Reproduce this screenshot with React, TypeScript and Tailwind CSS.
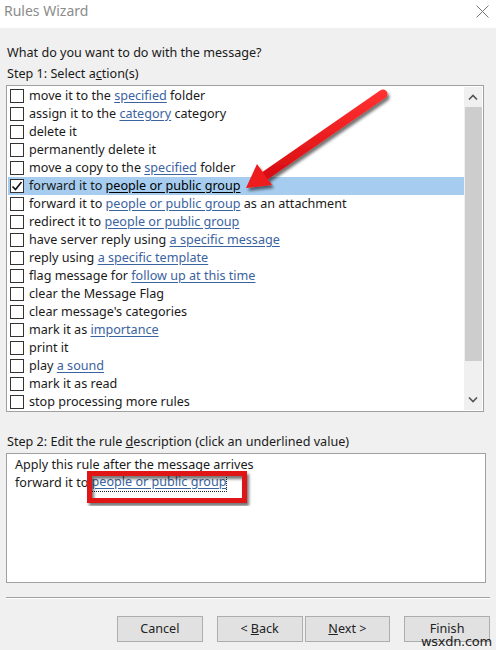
import React from 'react'

type Part = string | { link: string }

const actions: Part[][] = [
  ['move it to the ', { link: 'specified' }, ' folder'],
  ['assign it to the ', { link: 'category' }, ' category'],
  ['delete it'],
  ['permanently delete it'],
  ['move a copy to the ', { link: 'specified' }, ' folder'],
  ['forward it to ', { link: 'people or public group' }],
  ['forward it to ', { link: 'people or public group' }, ' as an attachment'],
  ['redirect it to ', { link: 'people or public group' }],
  ['have server reply using ', { link: 'a specific message' }],
  ['reply using ', { link: 'a specific template' }],
  ['flag message for ', { link: 'follow up at this time' }],
  ['clear the Message Flag'],
  ["clear message's categories"],
  ['mark it as ', { link: 'importance' }],
  ['print it'],
  ['play ', { link: 'a sound' }],
  ['mark it as read'],
  ['stop processing more rules'],
]

const SELECTED = 5

function Checkbox({ checked }: { checked: boolean }) {
  return (
    <div className="w-[14px] h-[14px] border border-[#333] bg-white flex items-center justify-center shrink-0">
      {checked && (
        <svg width="12" height="12" viewBox="0 0 12 12">
          <path d="M1.5 6.5 L4.5 9.5 L10.5 2" fill="none" stroke="#111" strokeWidth="1.6" />
        </svg>
      )}
    </div>
  )
}

function ActionRow({ parts, selected }: { parts: Part[]; selected: boolean }) {
  return (
    <div className={`h-[18px] flex items-center gap-[5px] pl-[2px] ${selected ? 'bg-[#a6cdef]' : ''}`}>
      <Checkbox checked={selected} />
      <span className="whitespace-nowrap leading-[18px]">
        {parts.map((p, i) =>
          typeof p === 'string' ? (
            <span key={i}>{p}</span>
          ) : (
            <span key={i} className={`underline underline-offset-2 ${selected ? 'text-black' : 'text-[#3a63a0]'}`}>
              {p.link}
            </span>
          )
        )}
      </span>
    </div>
  )
}

function Button({ children, className = '' }: { children: React.ReactNode; className?: string }) {
  return (
    <div className={`w-[86px] h-[26px] bg-[#e1e1e1] border border-[#adadad] flex items-center justify-center text-[12.6px] text-[#222] ${className}`}>
      {children}
    </div>
  )
}

export default function App() {
  return (
    <div className="relative w-[496px] h-[650px] bg-[#f0f0f0] overflow-hidden font-['Noto_Sans',sans-serif] text-[12.6px] text-[#1a1a1a]">
      {/* Title bar */}
      <div className="h-[28px] bg-white flex items-start justify-between pl-[4px] pr-[7px] pt-[1px]">
        <span className="text-[14px] leading-[20px] text-[#8c8c8c]">Rules Wizard</span>
        <svg width="13" height="13" viewBox="0 0 13 13" className="mt-[4px]">
          <path d="M0.5 0.5 L12.5 12.5 M12.5 0.5 L0.5 12.5" stroke="#777" strokeWidth="1" />
        </svg>
      </div>

      <div className="px-[6px]">
        <div className="mt-[16px] h-[18px] leading-[18px] pl-[1px]">What do you want to do with the message?</div>
        <div className="mt-[3px] h-[18px] leading-[18px] pl-[1px]">
          Step 1: Select a<span className="underline">c</span>tion(s)
        </div>

        {/* Action list */}
        <div className="mt-[2px] w-[478px] h-[327px] border border-[#a0a0a0] bg-white flex p-px">
          <div className="flex-1 flex flex-col">
            {actions.map((parts, i) => (
              <ActionRow key={i} parts={parts} selected={i === SELECTED} />
            ))}
          </div>
          <div className="w-[18px] bg-[#f0f0f0] flex flex-col items-center">
            <div className="h-[20px] flex items-center justify-center">
              <svg width="10" height="6" viewBox="0 0 10 6">
                <path d="M1 5.5 L5 1.5 L9 5.5" fill="none" stroke="#555" strokeWidth="1.6" />
              </svg>
            </div>
            <div className="w-[17px] h-[254px] bg-[#cdcdcd]" />
            <div className="flex-1" />
            <div className="h-[20px] flex items-center justify-center">
              <svg width="10" height="6" viewBox="0 0 10 6">
                <path d="M1 0.5 L5 4.5 L9 0.5" fill="none" stroke="#555" strokeWidth="1.6" />
              </svg>
            </div>
          </div>
        </div>

        <div className="mt-[21px] h-[18px] leading-[18px] pl-[1px]">
          Step 2: Edit the rule <span className="underline">d</span>escription (click an underlined value)
        </div>

        {/* Rule description */}
        <div className="mt-[2px] w-[480px] h-[130px] border border-[#a0a0a0] bg-white pl-[8px] pt-[2px]">
          <div className="h-[18px] leading-[18px]">Apply this rule after the message arrives</div>
          <div className="h-[18px] leading-[18px] flex">
            <span>forward it to&nbsp;</span>
            <span className="outline outline-1 outline-dotted outline-[#222] text-[#3a63a0] underline underline-offset-2 leading-[16px] h-[17px]">
              people or public group
            </span>
          </div>
        </div>

        <div className="mt-[14px] w-[484px] border-t border-[#a0a0a0] border-b border-b-white" />

        <div className="mt-[17px] flex pl-[111px]">
          <Button>Cancel</Button>
          <Button className="ml-[14px] w-[85px]">
            &lt; <span className="underline ml-[3px]">B</span>ack
          </Button>
          <Button className="ml-[2px]">
            <span className="underline">N</span>ext &gt;
          </Button>
          <Button className="ml-[14px]">Finish</Button>
        </div>
      </div>

      {/* Annotation overlay: arrow and highlight box */}
      <svg className="absolute inset-0 pointer-events-none" width="496" height="650" viewBox="0 0 496 650">
        <defs>
          <filter id="shadow" x="-20%" y="-20%" width="140%" height="140%">
            <feDropShadow dx="2" dy="3" stdDeviation="1.6" floodColor="#000" floodOpacity="0.55" />
          </filter>
          <linearGradient id="red" x1="0" y1="0" x2="0" y2="1">
            <stop offset="0" stopColor="#ff3030" />
            <stop offset="1" stopColor="#d80d12" />
          </linearGradient>
        </defs>
        <g filter="url(#shadow)">
          <line x1="383" y1="94" x2="266" y2="175" stroke="url(#red)" strokeWidth="9" strokeLinecap="round" />
          <path d="M246 188 L272 185 L257 164 Z" fill="#ee1a1a" />
        </g>
        <rect x="89.5" y="473.5" width="155" height="27" fill="none" stroke="#e01414" strokeWidth="5" filter="url(#shadow)" />
      </svg>

      <div className="absolute left-[421px] top-[634px] text-[13px] leading-[15px] text-[#222] font-['DejaVu_Sans',sans-serif] tracking-[-0.3px]">
        wsxdn.com
      </div>
    </div>
  )
}
